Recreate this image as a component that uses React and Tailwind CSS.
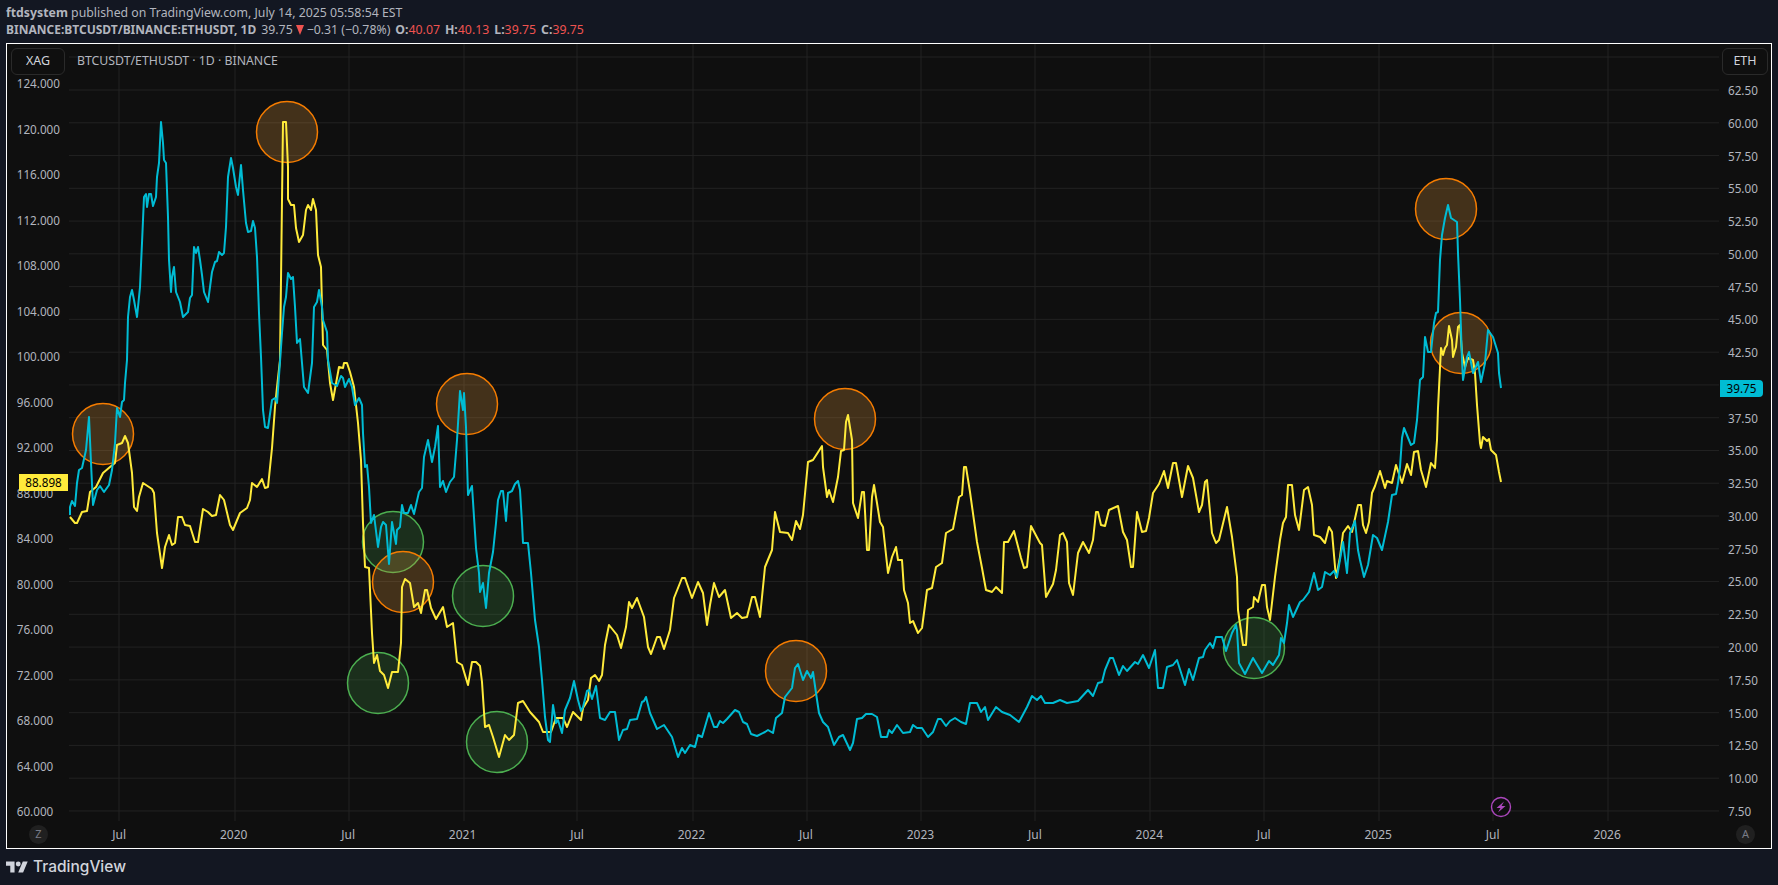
import React from "react";

const FONT = "font-['Noto_Sans',sans-serif]";

const leftTicks = ["124.000","120.000","116.000","112.000","108.000","104.000","100.000","96.000","92.000","88.000","84.000","80.000","76.000","72.000","68.000","64.000","60.000"];
const rightTicks = ["62.50","60.00","57.50","55.00","52.50","50.00","47.50","45.00","42.50","40.00","37.50","35.00","32.50","30.00","27.50","25.00","22.50","20.00","17.50","15.00","12.50","10.00","7.50"];
const timeTicks = ["Jul","2020","Jul","2021","Jul","2022","Jul","2023","Jul","2024","Jul","2025","Jul","2026"];

const gridX = [119,235,349,464,577,693,807,921,1035,1150,1264,1379,1493,1608];
const gridY = [57, ...rightTicks.map((_, i) => 90 + i * 32.77)];

// BTCUSDT/ETHUSDT, traced by hand
const cyan = "70,515 70,507 72,501 75,506 77,483 79,470 82,468 86,450 89,417 91,463 93,505 97,490 100,486 104,492 109,485 112,470 115,443 117,408 120,417 122,402 124,400 125,383 127,360 128,317 130,297 132,290 134,300 137,317 140,287 142,243 144,197 146,194 147,207 149,194 151,194 153,206 156,197 157,177 159,163 161,122 163,143 164,160 166,163 168,217 169,260 171,292 172,277 174,267 176,292 180,302 183,317 188,312 190,298 192,295 194,247 196,253 198,247 200,260 202,275 204,292 208,302 212,272 215,262 217,261 219,252 222,255 224,253 226,227 228,177 231,158 233,168 236,187 238,195 241,165 243,190 246,223 248,232 251,231 253,221 255,228 257,257 259,313 261,357 263,410 265,427 268,428 272,400 275,398 277,403 278,390 282,333 284,307 286,297 288,273 291,279 293,277 295,307 297,343 300,339 302,363 304,387 308,393 312,363 314,307 317,302 319,290 322,307 323,320 327,332 328,360 332,383 337,386 341,376 343,378 345,387 349,379 352,387 355,405 359,398 362,405 363,433 365,467 367,465 369,487 371,523 374,515 378,547 381,527 383,522 386,525 389,564 392,522 396,544 397,530 400,527 402,505 404,513 408,513 411,505 414,514 419,492 422,488 424,457 428,440 432,462 435,447 438,426 440,487 443,481 446,492 450,482 454,477 457,440 460,391 463,410 464,393 466,427 468,495 472,486 474,517 476,548 479,573 480,592 483,583 486,608 489,573 493,552 496,523 498,500 501,491 503,491 506,521 508,493 512,491 515,484 518,481 520,490 522,523 523,543 528,543 531,573 535,620 539,647 542,680 545,717 548,740 550,742 553,705 556,723 558,720 562,733 565,710 570,698 574,681 578,700 581,711 583,707 587,691 589,690 592,699 596,686 600,718 605,720 610,712 615,712 619,740 623,730 627,729 630,720 637,719 642,702 644,701 646,697 650,713 657,729 664,725 672,737 678,757 682,748 685,753 690,745 695,747 698,735 702,737 709,713 714,727 717,727 720,721 723,723 727,719 735,710 739,712 743,722 747,724 751,734 757,736 765,732 768,730 773,733 776,718 782,713 785,697 792,688 795,668 798,664 803,680 807,671 811,678 813,672 816,693 819,713 823,722 828,727 834,745 839,737 843,735 850,750 853,743 857,719 862,718 866,714 872,714 877,717 881,737 887,737 889,730 892,733 897,725 903,733 910,732 913,725 917,728 922,728 928,737 933,732 938,719 941,719 946,726 950,721 955,718 961,722 966,724 970,703 977,703 981,712 985,707 988,720 996,707 1002,712 1010,715 1019,722 1027,707 1032,696 1037,700 1041,696 1045,703 1053,703 1060,700 1067,703 1078,701 1088,690 1093,696 1098,683 1102,682 1105,670 1110,658 1113,658 1119,675 1123,666 1127,671 1135,662 1138,664 1143,655 1149,668 1155,650 1158,688 1163,688 1167,667 1173,665 1177,660 1185,685 1189,669 1193,680 1199,658 1203,657 1205,650 1210,643 1213,648 1216,637 1222,637 1226,651 1232,633 1236,625 1237,630 1239,663 1245,674 1253,658 1262,673 1269,661 1273,665 1279,655 1281,638 1284,643 1287,623 1289,605 1293,617 1300,602 1303,600 1309,592 1314,573 1318,590 1322,587 1325,572 1330,575 1334,571 1337,577 1343,542 1347,573 1350,533 1355,521 1358,550 1360,560 1364,577 1368,565 1373,535 1377,538 1382,550 1388,522 1392,495 1396,494 1398,483 1400,467 1402,438 1404,428 1411,445 1414,443 1417,420 1420,380 1423,377 1425,337 1428,352 1431,352 1434,323 1436,313 1438,312 1440,260 1442,235 1445,218 1448,205 1451,218 1457,222 1458,253 1460,300 1462,360 1463,380 1467,357 1469,352 1473,373 1478,362 1481,382 1485,363 1488,330 1493,337 1498,353 1499,373 1501,388";

const yellow = "70,517 75,523 77,523 82,512 87,511 90,492 96,487 103,473 110,467 115,463 117,445 122,443 125,436 128,443 132,473 134,507 137,511 139,497 143,483 152,489 154,493 157,533 162,568 165,547 169,535 172,545 175,543 178,517 182,517 185,525 190,526 195,542 198,542 203,509 208,512 212,516 216,515 220,495 224,500 230,525 233,530 240,513 247,508 250,500 252,483 257,487 262,479 265,488 268,487 272,448 275,407 277,387 280,360 282,200 283,122 286,122 288,167 288,199 291,205 294,205 296,228 299,242 303,235 306,210 308,205 311,210 313,199 316,210 318,255 321,267 323,345 327,350 330,383 333,400 339,367 343,368 344,363 347,363 350,372 354,387 358,423 361,460 363,523 365,567 369,568 372,633 374,663 377,655 380,671 384,675 388,688 392,672 398,672 401,643 402,587 405,579 410,583 414,607 418,603 421,613 425,590 427,590 431,608 436,619 443,607 447,627 453,623 457,662 462,665 468,685 472,662 476,662 480,666 482,682 485,727 489,725 493,737 499,757 505,735 509,740 514,735 518,703 523,701 530,712 539,722 543,732 551,732 556,718 563,718 567,727 573,712 581,720 583,708 588,700 591,678 595,675 599,681 602,675 605,645 609,625 617,635 621,648 626,627 629,602 632,608 637,598 644,617 648,647 651,654 657,637 660,637 664,649 670,630 674,598 682,578 685,578 692,598 698,582 703,593 707,625 710,605 714,583 719,597 725,590 731,618 737,613 742,618 747,617 752,597 755,597 760,617 765,567 772,550 775,512 780,532 788,533 792,540 796,521 800,529 803,515 808,462 813,460 822,446 823,467 827,497 829,490 833,502 838,477 841,451 844,450 846,422 848,415 852,440 853,503 858,518 862,492 864,492 867,550 869,550 872,497 874,485 877,503 880,522 883,527 888,573 892,557 896,547 898,560 902,560 904,590 908,603 910,623 913,621 918,633 922,628 927,590 932,588 936,567 942,563 946,533 953,529 959,497 962,495 964,467 966,467 970,492 977,542 982,568 986,590 992,592 996,587 1002,593 1004,542 1008,542 1014,531 1021,558 1024,568 1027,567 1031,526 1040,543 1042,545 1046,597 1053,584 1056,570 1060,535 1063,533 1067,542 1069,583 1073,595 1078,553 1083,542 1089,553 1093,540 1096,512 1098,512 1101,525 1105,526 1109,510 1118,506 1123,532 1127,540 1131,567 1133,567 1137,512 1142,532 1146,531 1149,518 1153,493 1159,484 1164,471 1168,488 1173,463 1176,463 1182,497 1188,466 1193,478 1199,512 1202,505 1205,482 1207,480 1210,512 1212,533 1216,543 1219,540 1227,507 1232,537 1237,577 1238,610 1243,645 1246,645 1248,610 1253,607 1254,597 1258,602 1262,585 1265,585 1267,607 1270,620 1275,577 1280,540 1283,523 1286,517 1288,485 1292,485 1295,515 1299,530 1304,490 1308,487 1312,505 1314,535 1320,537 1325,543 1329,527 1332,532 1336,578 1340,557 1343,533 1348,526 1352,532 1358,505 1361,505 1363,525 1366,533 1369,522 1372,493 1375,486 1380,471 1385,488 1387,481 1392,483 1396,465 1402,483 1407,464 1411,475 1414,452 1418,451 1421,470 1426,487 1431,463 1435,468 1437,440 1438,408 1441,348 1443,355 1445,348 1447,345 1449,326 1452,340 1453,357 1456,347 1458,327 1460,325 1462,353 1465,367 1468,358 1473,360 1475,373 1477,405 1480,443 1481,448 1483,437 1487,441 1489,439 1491,450 1496,455 1499,472 1501,482";

const orangeMarks = [[103,434],[287,132],[467,404],[403,582],[845,419],[796,671],[1446,209],[1461,343]];
const greenMarks = [[393,542],[483,596],[378,683],[497,742],[1254,648]];

function Chart() {
  return (
    <svg className="w-[1650px] h-[777px] shrink-0" viewBox="69 44 1650 777">
      {gridY.map((y) => (
        <line key={y} x1="69" x2="1719" y1={y} y2={y} stroke="#222222" />
      ))}
      {gridX.map((x) => (
        <line key={x} x1={x} x2={x} y1="44" y2="821" stroke="#222222" />
      ))}
      {greenMarks.map(([cx, cy]) => (
        <circle key={cx} cx={cx} cy={cy} r="30.5" fill="#4caf50" fillOpacity="0.2" stroke="#4caf50" strokeWidth="1.5" />
      ))}
      {orangeMarks.map(([cx, cy]) => (
        <circle key={cx} cx={cx} cy={cy} r="30.5" fill="#df973b" fillOpacity="0.25" stroke="#f57c00" strokeWidth="1.5" />
      ))}
      <polyline points={yellow} fill="none" stroke="#ffeb3b" strokeWidth="2" strokeLinejoin="round" />
      <polyline points={cyan} fill="none" stroke="#00bcd4" strokeWidth="2" strokeLinejoin="round" />
      {/* lightning mark */}
      <circle cx="1501" cy="807" r="9.5" fill="#0f0f0f" stroke="#ab47bc" strokeWidth="1.4" />
      <path d="M1504 801.5 L1496.5 808 H1500.5 L1498 812.5 L1505.5 806 H1501.5 Z" fill="#ab47bc" />
    </svg>
  );
}

function Dot({ label }) {
  return (
    <div className="w-[19px] h-[19px] shrink-0 rounded-full bg-[#202020] flex items-center justify-center text-[11px] text-[#787b86]">
      {label}
    </div>
  );
}

export default function App() {
  return (
    <div className={`w-[1778px] h-[885px] overflow-hidden bg-[#131722] ${FONT} flex flex-col`}>
      {/* header */}
      <div className="h-[43px] px-[6px] pt-[4px] shrink-0 text-[12.3px] leading-[17px] text-[#b2b5be] whitespace-nowrap">
        <div>
          <span className="font-bold">ftdsystem</span> published on TradingView.com, July 14, 2025 05:58:54 EST
        </div>
        <div className="flex gap-[5px]">
          <span className="font-bold text-[12px]">BINANCE:BTCUSDT/BINANCE:ETHUSDT, 1D</span>
          <span className="flex items-center gap-[3px]">
            39.75
            <svg className="w-[8px] h-[10px]" viewBox="0 0 8 10" fill="#ef5350">
              <path d="M0 0H8L4 10Z" />
            </svg>
            −0.31 (−0.78%)
          </span>
          <span><span className="font-bold">O:</span><span className="text-[#ef5350]">40.07</span></span>
          <span><span className="font-bold">H:</span><span className="text-[#ef5350]">40.13</span></span>
          <span><span className="font-bold">L:</span><span className="text-[#ef5350]">39.75</span></span>
          <span><span className="font-bold">C:</span><span className="text-[#ef5350]">39.75</span></span>
        </div>
      </div>

      {/* chart panel */}
      <div className="relative ml-[6px] w-[1766px] h-[806px] shrink-0 border border-white bg-[#0f0f0f] flex flex-col text-[11.7px] text-[#b2b5be]">
        <div className="flex h-[777px] shrink-0">
          <div className="w-[62px] shrink-0 flex flex-col items-end">
            <div className="w-full pl-[4px] pt-[4px]">
              <div className="w-[54px] h-[27px] flex items-center justify-center rounded-md border border-[#2a2a2a] text-[12.5px] text-[#d1d4dc] leading-none">
                XAG
              </div>
            </div>
            <div className="flex flex-col gap-[29.5px] pr-[9px]">
              {leftTicks.map((t) => (
                <div key={t} className="h-[16px] leading-[16px]">{t}</div>
              ))}
            </div>
          </div>
          <Chart />
          <div className="w-[52px] shrink-0 flex flex-col">
            <div className="pl-[3px] pt-[4px]">
              <div className="w-[46px] h-[27px] flex items-center justify-center rounded-md border border-[#2a2a2a] text-[12.5px] text-[#d1d4dc] leading-none">
                ETH
              </div>
            </div>
            <div className="flex flex-col gap-[16.77px] pl-[9px] mt-[7px]">
              {rightTicks.map((t) => (
                <div key={t} className="h-[16px] leading-[16px]">{t}</div>
              ))}
            </div>
          </div>
        </div>
        <div className="flex-1 flex items-center pl-[22px] text-[12px]">
          <Dot label="Z" />
          <div className="flex ml-[14px]">
            {timeTicks.map((t, i) => (
              <div key={i} className="w-[114.46px] text-center">{t}</div>
            ))}
          </div>
          <div className="ml-auto mr-[16px]">
            <Dot label="A" />
          </div>
        </div>

        {/* overlays */}
        <div className="absolute left-[70px] top-[4px] h-[27px] flex items-center text-[12.3px] text-[#b2b5be] whitespace-nowrap">
          BTCUSDT/ETHUSDT · 1D · BINANCE
        </div>
        <div className="absolute left-[12px] top-[430px] w-[49px] h-[17px] bg-[#ffeb3b] text-black flex items-center justify-center">
          88.898
        </div>
        <div className="absolute left-[1713px] top-[336px] w-[43px] h-[17px] bg-[#00bcd4] rounded-r-sm text-black flex items-center justify-center">
          39.75
        </div>
      </div>

      {/* footer logo */}
      <div className="flex items-center gap-[5px] pl-[6px] mt-[8px] text-[#d1d4dc]">
        <svg className="w-[22px] h-[12px]" viewBox="0 4 36 18" fill="currentColor">
          <path d="M14 22H7V11H0V4h14v18zM28 22h-8l7.5-18h8L28 22z" />
          <circle cx="20" cy="8" r="4" />
        </svg>
        <span className="font-['Inter',sans-serif] font-medium text-[15.5px] leading-[20px]">TradingView</span>
      </div>
    </div>
  );
}
